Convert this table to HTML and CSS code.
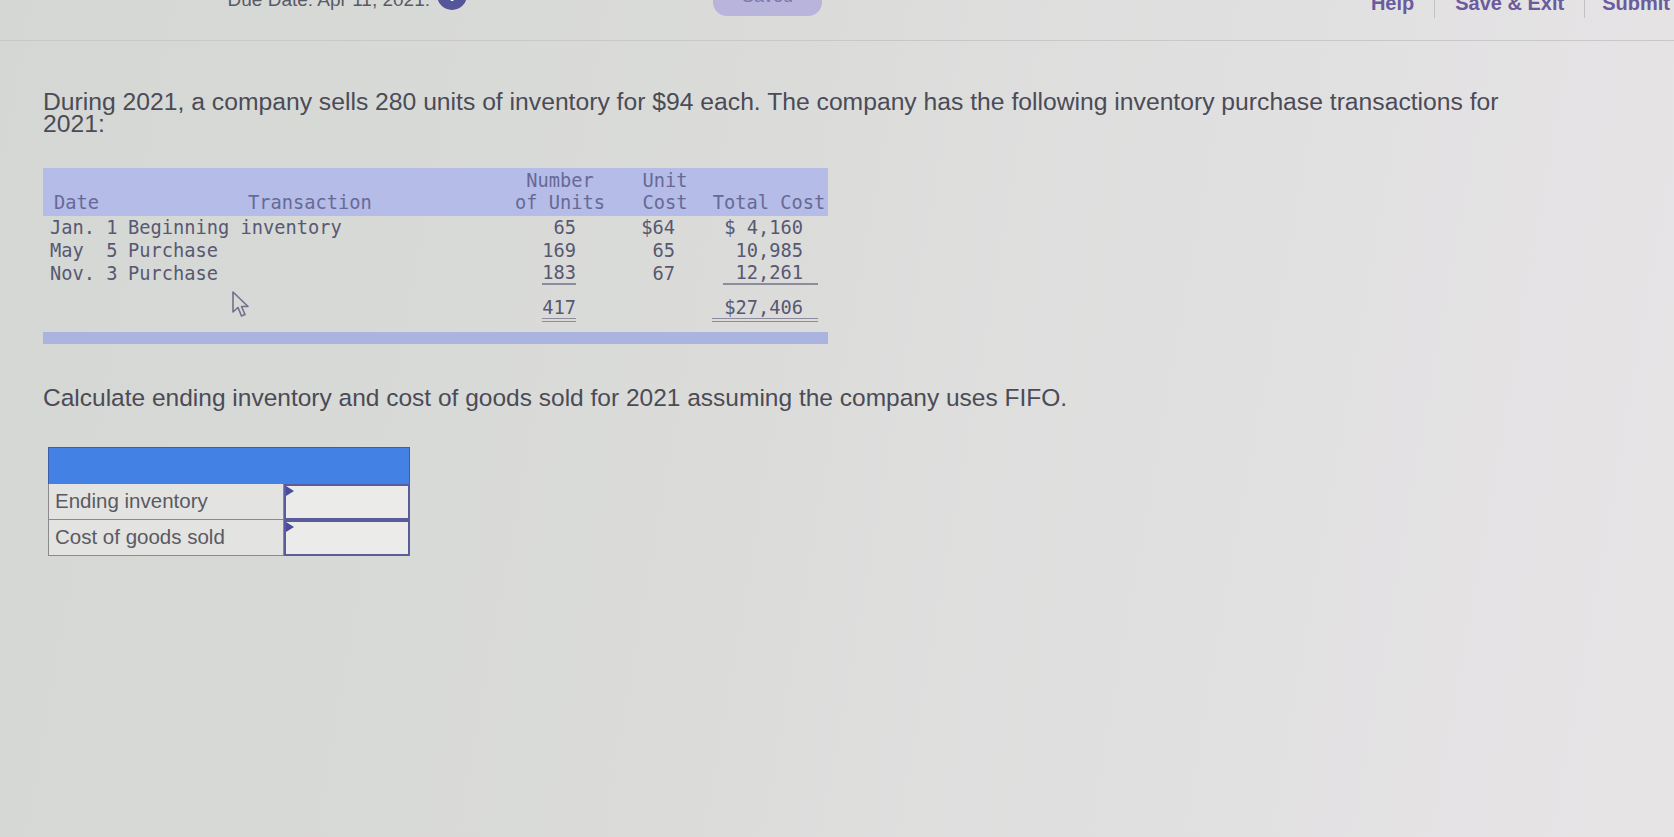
FILE: index.html
```html
<!DOCTYPE html>
<html lang="en">
<head>
<meta charset="utf-8">
<title>FIFO Inventory</title>
<link rel="stylesheet" href="styles.css">
</head>
<body>
<header class="topbar">
  <div class="due">Due Date: Apr 11, 2021:</div>
  <span class="info">i</span>
  <span class="saved">Saved</span>
  <nav class="links">
    <a class="link">Help</a>
    <a class="link sep">Save &amp; Exit</a>
    <a class="link sep last">Submit</a>
  </nav>
</header>

<main class="content">
  <p class="para">During 2021, a company sells 280 units of inventory for $94 each. The company has the following inventory purchase transactions for 2021:</p>

  <section class="inv">
    <div class="row head">
      <div class="c1 hl">Date</div>
      <div class="c2 hc">Transaction</div>
      <div class="c3 hc">Number<br>of Units</div>
      <div class="c4 hc">Unit<br>Cost</div>
      <div class="c5 hc">Total Cost</div>
    </div>
    <div class="row">
      <div class="c1">Jan. 1</div>
      <div class="c2">Beginning inventory</div>
      <div class="c3 num">65</div>
      <div class="c4 num">$64</div>
      <div class="c5 num">$ 4,160</div>
    </div>
    <div class="row">
      <div class="c1">May&nbsp; 5</div>
      <div class="c2">Purchase</div>
      <div class="c3 num">169</div>
      <div class="c4 num">65</div>
      <div class="c5 num">10,985</div>
    </div>
    <div class="row">
      <div class="c1">Nov. 3</div>
      <div class="c2">Purchase</div>
      <div class="c3 num"><span class="u1">183</span></div>
      <div class="c4 num">67</div>
      <div class="c5 num"><span class="u1 wide">12,261</span></div>
    </div>
    <div class="row total">
      <div class="c1"></div>
      <div class="c2"></div>
      <div class="c3 num"><span class="u2">417</span></div>
      <div class="c4 num"></div>
      <div class="c5 num"><span class="u2 wide">$27,406</span></div>
    </div>
    <div class="footbar"></div>
  </section>

  <p class="question">Calculate ending inventory and cost of goods sold for 2021 assuming the company uses FIFO.</p>

  <section class="answer">
    <div class="ahead"></div>
    <div class="arow">
      <div class="alabel">Ending inventory</div>
      <div class="ainput"></div>
    </div>
    <div class="arow">
      <div class="alabel">Cost of goods sold</div>
      <div class="ainput"></div>
    </div>
  </section>
</main>

<svg class="cursor" width="24" height="30" viewBox="0 0 24 30">
  <path d="M2 2 L2 22 L7 17.5 L10.5 26 L14 24.5 L10.5 16.5 L17 16.5 Z" fill="none" stroke="#707088" stroke-width="1.6" stroke-linejoin="round"/>
</svg>
</body>
</html>
```

FILE: styles.css
```css
* { box-sizing: border-box; }

html, body {
  margin: 0;
  padding: 0;
}

body {
  width: 1674px;
  height: 837px;
  overflow: hidden;
  position: relative;
  background: linear-gradient(100deg, #d4d7d3 0%, #dbdcda 45%, #e2e1e2 75%, #e7e4e6 100%);
  font-family: "Liberation Sans", Arial, sans-serif;
  color: #4b4b57;
}

/* top bar, cut off by the photo frame */
.topbar {
  height: 41px;
  display: flex;
  align-items: flex-start;
  border-bottom: 1px solid #c8c9c7;
  overflow: hidden;
}

.due {
  width: 430px;
  text-align: right;
  font-size: 19px;
  line-height: 20px;
  margin-top: -10px;
  color: #5a5a66;
}

.info {
  width: 30px;
  height: 30px;
  margin-top: -20px;
  margin-left: 7px;
  border-radius: 50%;
  background: #55559a;
  color: #fff;
  font-weight: bold;
  font-size: 18px;
  line-height: 30px;
  text-align: center;
}

.saved {
  width: 109px;
  height: 32px;
  margin-top: -16px;
  margin-left: 246px;
  border-radius: 14px;
  background: #b9b4dc;
  color: #7b78ae;
  font-size: 18px;
  line-height: 24px;
  text-align: center;
}

.links {
  margin-left: auto;
  margin-right: 4px;
  display: flex;
  align-items: flex-start;
}

.link {
  font-size: 20px;
  font-weight: bold;
  line-height: 20px;
  color: #6a5c9c;
  padding: 0 20px;
  margin-top: -7px;
  height: 25px;
}

.link.sep {
  border-left: 1px solid #c2c0c6;
}

.link.last {
  padding-left: 17px;
  padding-right: 0;
}

/* content */
.content {
  padding-left: 43px;
}

.para {
  margin: 50px 0 0;
  width: 1500px;
  font-size: 24.7px;
  line-height: 22px;
}

/* inventory table */
.inv {
  margin-top: 33px;
  width: 785px;
  font-family: "DejaVu Sans Mono", "Liberation Mono", monospace;
  font-size: 18.7px;
  color: #575872;
}

.row {
  display: grid;
  grid-template-columns: 77px 380px 120px 90px 118px;
  height: 23px;
  line-height: 22px;
  align-items: center;
}

.row.head {
  height: 48px;
  align-items: end;
  padding-bottom: 2px;
  background: #b4bce7;
  color: #686996;
}

.c1 { padding-left: 7px; white-space: nowrap; }
.c2 { padding-left: 8px; white-space: nowrap; }
.hl { padding-left: 11px; }
.hc { text-align: center; padding-left: 0; }

.num { text-align: right; white-space: nowrap; }
.c3.num { padding-right: 44px; }
.c4.num { padding-right: 35px; }
.c5.num { padding-right: 25px; }

.u1, .u2 {
  display: inline-block;
  line-height: 21px;
}

.u1 { border-bottom: 2px solid #8c8c9c; }
.u2 { border-bottom: 4px double #8c8c9c; }

.u1.wide, .u2.wide {
  padding-left: 12px;
  margin-right: -15px;
  padding-right: 15px;
}

.row.total {
  height: 47px;
  align-items: start;
  padding-top: 12px;
}

.footbar {
  height: 12px;
  background: #abb4df;
}

/* question */
.question {
  margin: 43px 0 0;
  font-size: 24.5px;
  line-height: 22px;
}

/* answer table */
.answer {
  margin: 38px 0 0 5px;
  width: 362px;
}

.ahead {
  height: 37px;
  background: #4382e4;
  border-top: 1px solid #3d5fa8;
  border-left: 1px solid #3d5fa8;
  border-right: 1px solid #3d5fa8;
}

.arow {
  display: grid;
  grid-template-columns: 236px 126px;
  height: 36px;
}

.alabel {
  background: #e3e3e1;
  border: 1px solid #8a8a8e;
  border-top: none;
  padding-left: 6px;
  font-size: 20.5px;
  line-height: 34px;
  color: #5a5a62;
}

.arow:first-of-type .alabel { border-top: 1px solid #8a8a8e; }

.ainput {
  position: relative;
  background: #ebebea;
  border: 2px solid #5a5c9c;
}

.ainput::before {
  content: "";
  position: absolute;
  left: 0;
  top: 0;
  border-top: 5px solid transparent;
  border-bottom: 5px solid transparent;
  border-left: 8px solid #4b4d9c;
}

.cursor {
  position: absolute;
  left: 231px;
  top: 290px;
}
```
